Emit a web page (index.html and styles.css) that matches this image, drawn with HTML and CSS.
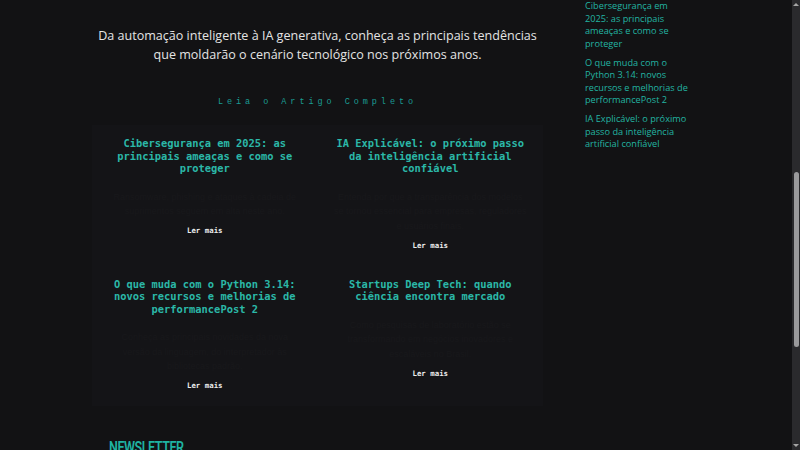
FILE: index.html
```html
<!DOCTYPE html>
<html lang="pt-BR">
<head>
<meta charset="utf-8">
<title>Tendências tecnológicas</title>
<link rel="stylesheet" href="styles.css">
</head>
<body>
<div class="viewport">
  <div class="page">
    <main class="main">
      <p class="lead">Da automação inteligente à IA generativa, conheça as principais tendências<br>que moldarão o cenário tecnológico nos próximos anos.</p>
      <a class="read-link" href="#">Leia o Artigo Completo</a>
      <section class="grid">
        <article class="card">
          <h3 class="card-title">Cibersegurança em 2025: as principais ameaças e como se proteger</h3>
          <p class="card-excerpt">Ransomware, phishing e ataques à cadeia de suprimentos seguem em alta neste ano.</p>
          <a class="card-more" href="#">Ler mais</a>
        </article>
        <article class="card">
          <h3 class="card-title">IA Explicável: o próximo passo da inteligência artificial confiável</h3>
          <p class="card-excerpt">Entenda por que a transparência dos modelos se tornou essencial para empresas, reguladores e usuários finais.</p>
          <a class="card-more" href="#">Ler mais</a>
        </article>
        <article class="card">
          <h3 class="card-title">O que muda com o Python 3.14: novos recursos e melhorias de performancePost 2</h3>
          <p class="card-excerpt">Conheça as principais novidades da nova versão da linguagem, do interpretador às bibliotecas padrão.</p>
          <a class="card-more" href="#">Ler mais</a>
        </article>
        <article class="card">
          <h3 class="card-title">Startups Deep Tech: quando ciência encontra mercado</h3>
          <p class="card-excerpt">Como pesquisas de laboratório estão se transformando em negócios inovadores e escaláveis no Brasil.</p>
          <a class="card-more" href="#">Ler mais</a>
        </article>
      </section>
      <h2 class="newsletter">NEWSLETTER</h2>
    </main>
    <aside class="sidebar">
      <ul class="side-list">
        <li><a href="#">Cibersegurança em 2025: as principais ameaças e como se proteger</a></li>
        <li><a href="#">O que muda com o Python 3.14: novos recursos e melhorias de performancePost 2</a></li>
        <li><a href="#">IA Explicável: o próximo passo da inteligência artificial confiável</a></li>
      </ul>
    </aside>
  </div>
  <div class="scrollbar">
    <span class="sb-arrow sb-up"></span>
    <div class="sb-track"><span class="sb-thumb"></span></div>
    <span class="sb-arrow sb-down"></span>
  </div>
</div>
</body>
</html>
```

FILE: styles.css
```css
* { box-sizing: border-box; }
html, body { margin: 0; padding: 0; }
body {
  background: #121214;
  color: #e2e2e2;
  font-family: "Open Sans", "Liberation Sans", sans-serif;
  overflow: hidden;
}
a { text-decoration: none; }

.viewport {
  display: flex;
  width: 800px;
  height: 450px;
  overflow: hidden;
}
.page {
  flex: 1;
  display: flex;
  align-items: flex-start;
  gap: 42px;
  padding-left: 92px;
  overflow: hidden;
}

.main {
  width: 451px;
  flex: none;
  display: flex;
  flex-direction: column;
  align-items: center;
}
.lead {
  margin: 26px 0 0;
  font-size: 12.55px;
  line-height: 19px;
  text-align: center;
  color: #e4e4e4;
  white-space: nowrap;
}
.read-link {
  margin-top: 33px;
  font-family: "Liberation Mono", monospace;
  font-size: 8.5px;
  line-height: 10px;
  letter-spacing: 3.95px;
  color: #1a9c93;
}
.grid {
  margin-top: 18px;
  width: 100%;
  display: grid;
  grid-template-columns: 1fr 1fr;
  background: #141417;
}
.card {
  display: flex;
  flex-direction: column;
  align-items: center;
  padding: 12px 15px 15px;
  text-align: center;
}
.card-title {
  margin: 0;
  font-family: "DejaVu Sans Mono", monospace;
  font-weight: bold;
  font-size: 10.4px;
  line-height: 12.5px;
  color: #2bb8a8;
}
.card-excerpt {
  margin: 15px 0 0;
  font-family: "Liberation Sans", sans-serif;
  font-size: 9px;
  line-height: 14.5px;
  color: #18181b;
}
.card-more {
  margin-top: 7.5px;
  font-family: "DejaVu Sans Mono", monospace;
  font-weight: bold;
  font-size: 7.4px;
  line-height: 10px;
  color: #ececec;
}
.newsletter {
  align-self: flex-start;
  margin: 33px 0 0 17px;
  font-family: Roboto, sans-serif;
  font-weight: 600;
  font-size: 16.5px;
  line-height: 18px;
  letter-spacing: -0.6px;
  color: #1fb3a2;
  transform: scaleX(0.76);
  transform-origin: left center;
}

.sidebar {
  width: 108px;
  flex: none;
}
.side-list {
  list-style: none;
  margin: 0;
  padding: 0;
  display: flex;
  flex-direction: column;
  gap: 6.5px;
}
.side-list a {
  display: block;
  font-size: 9.2px;
  line-height: 12.5px;
  color: #22b4a2;
}

.scrollbar {
  width: 8px;
  flex: none;
  display: flex;
  flex-direction: column;
  align-items: center;
  background: #2a2a2d;
}
.sb-track {
  flex: 1;
  width: 100%;
  display: flex;
  justify-content: center;
}
.sb-thumb {
  margin-top: 163px;
  width: 5px;
  height: 175px;
  border-radius: 3px;
  background: #9a9a9c;
}
.sb-arrow {
  width: 0;
  height: 0;
  border-left: 3px solid transparent;
  border-right: 3px solid transparent;
  margin: 3px 0;
}
.sb-up { border-bottom: 3px solid #a5a5a5; }
.sb-down { border-top: 3px solid #a5a5a5; }
```
